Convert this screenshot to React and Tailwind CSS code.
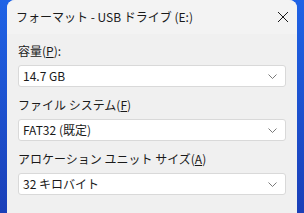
import React from "react";

function Chevron() {
  return (
    <svg width="9" height="5" viewBox="0 0 9 5" fill="none" stroke="#6b6b6b" strokeWidth="0.9">
      <path d="M0.5 0.5 L4.5 4.5 L8.5 0.5" />
    </svg>
  );
}

function Field({ label, value, mt }) {
  return (
    <div className={mt}>
      <div className="text-[12px] leading-[16px] text-[#1a1a1a]">{label}</div>
      <div className="mt-[6px] h-[22px] flex items-center justify-between bg-white border border-[#d9d9d9] rounded-[3px] pl-[4px] pr-[8px]">
        <span className="text-[12px] text-[#1a1a1a]">{value}</span>
        <Chevron />
      </div>
    </div>
  );
}

export default function App() {
  return (
    <div
      className="w-[304px] h-[213px] overflow-hidden flex px-[7px] bg-gradient-to-b from-[#1f63e6] to-[#1a3fb8]"
      style={{ fontFamily: '"Noto Sans CJK JP", "Noto Sans", sans-serif' }}
    >
      <div className="flex-1 bg-[#f0f0f0] rounded-t-[8px] flex flex-col">
        {/* title bar */}
        <div className="h-[34px] flex items-center justify-between pl-[9px] pr-[8px] bg-[#f3f3f3] rounded-t-[8px]">
          <span className="text-[12px] text-[#1a1a1a]">フォーマット - USB ドライブ (E:)</span>
          <svg width="12" height="12" viewBox="0 0 12 12" stroke="#1a1a1a" strokeWidth="1">
            <path d="M1 1 L11 11 M11 1 L1 11" />
          </svg>
        </div>
        <div className="px-[11px] pt-[9px]">
          <Field label={<>容量(<u>P</u>):</>} value="14.7 GB" />
          <Field mt="mt-[10px]" label={<>ファイル システム(<u>F</u>)</>} value="FAT32 (既定)" />
          <Field mt="mt-[10px]" label={<>アロケーション ユニット サイズ(<u>A</u>)</>} value="32 キロバイト" />
        </div>
      </div>
    </div>
  );
}
